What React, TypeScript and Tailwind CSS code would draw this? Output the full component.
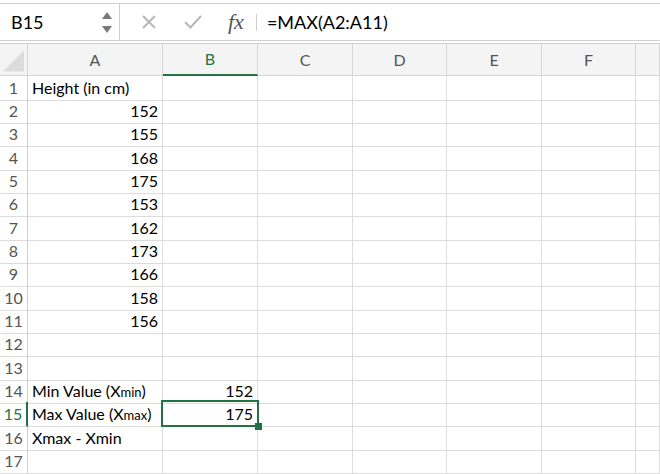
import React from 'react';

const rows: { n: number; a?: React.ReactNode; aRight?: boolean; b?: string }[] = [
  { n: 1, a: 'Height (in cm)' },
  { n: 2, a: '152', aRight: true },
  { n: 3, a: '155', aRight: true },
  { n: 4, a: '168', aRight: true },
  { n: 5, a: '175', aRight: true },
  { n: 6, a: '153', aRight: true },
  { n: 7, a: '162', aRight: true },
  { n: 8, a: '173', aRight: true },
  { n: 9, a: '166', aRight: true },
  { n: 10, a: '158', aRight: true },
  { n: 11, a: '156', aRight: true },
  { n: 12 },
  { n: 13 },
  { n: 14, a: <span>Min Value (X<span className="text-[13px]">min</span>)</span>, b: '152' },
  { n: 15, a: <span>Max Value (X<span className="text-[13px]">max</span>)</span>, b: '175' },
  { n: 16, a: 'Xmax - Xmin' },
  { n: 17 },
];

const heights = ['h-[23px]', 'h-[23px]', 'h-[24px]'];
const cols = ['A', 'B', 'C', 'D', 'E', 'F', ''];
const grid = 'grid grid-cols-[28px_135px_95px_95px_94px_95px_94px_1fr]';

const App: React.FC = () => {
  return (
    <div className="w-[660px] h-[474px] overflow-hidden bg-white text-black font-['Lato','Liberation_Sans',sans-serif]">
      {/* formula bar */}
      <div className="pt-[3px] bg-white">
        <div className="flex h-[38px] border-t border-b border-[#cfcfcf]">
          <div className="w-[120px] flex items-center justify-between border-r border-[#cfcfcf] pl-[11px] pr-[7px]">
            <span className="text-[18px]">B15</span>
            <div className="flex flex-col gap-[7px]">
              <svg width="10" height="7" viewBox="0 0 10 7"><path d="M5 0L10 7H0Z" fill="#7a7a7a" /></svg>
              <svg width="10" height="7" viewBox="0 0 10 7"><path d="M0 0H10L5 7Z" fill="#7a7a7a" /></svg>
            </div>
          </div>
          <div className="flex items-center pl-[21px]">
            <svg width="16" height="16" viewBox="0 0 16 16" className="mr-[27px]">
              <path d="M2 2L14 14M14 2L2 14" stroke="#b8b8b8" strokeWidth="2" />
            </svg>
            <svg width="18" height="16" viewBox="0 0 18 16" className="mr-[26px]">
              <path d="M1 8L6.5 13.5L17 2" stroke="#b8b8b8" strokeWidth="2" fill="none" />
            </svg>
            <span className="font-['Liberation_Serif',serif] italic text-[22px] text-[#555] leading-none mr-[12px]">fx</span>
            <div className="w-px h-[17px] bg-[#cfcfcf] mr-[10px]" />
            <span className="text-[18px]">=MAX(A2:A11)</span>
          </div>
        </div>
      </div>
      {/* column headers */}
      <div className={`${grid} mt-[2px] h-[33px] bg-[#f4f4f4] border-t border-[#cfcfcf]`}>
        <div className="border-r border-b border-[#d6d6d6] flex items-end justify-end p-[3px]">
          <svg width="22" height="22" viewBox="0 0 22 22"><path d="M22 0V22H0Z" fill="#dcdcdc" /></svg>
        </div>
        {cols.map((c) => (
          <div
            key={c || 'g'}
            className={`border-r flex items-center justify-center text-[16px] ${
              c === 'B'
                ? 'border-b-2 border-b-[#217346] border-r-[#d6d6d6] text-[#217346]'
                : 'border-b border-[#d6d6d6] text-[#555]'
            }`}
          >
            {c}
          </div>
        ))}
      </div>
      {/* rows */}
      {rows.map((r, i) => {
        const active = r.n === 15;
        return (
          <div key={r.n} className={`${grid} ${heights[i % 3]} text-[16px] ${active ? 'relative z-10' : ''}`}>
            <div
              className={`flex items-center justify-center border-b border-[#dcdcdc] ${
                active ? 'border-r-2 border-r-[#217346] text-[#217346]' : 'border-r border-r-[#d0d0d0] text-[#555]'
              }`}
            >
              {r.n}
            </div>
            <div
              className={`flex items-center border-r border-b border-[#dcdcdc] px-[4px] whitespace-nowrap ${
                r.aRight ? 'justify-end' : 'justify-start'
              }`}
            >
              {r.a}
            </div>
            <div className="relative flex items-center justify-end border-r border-b border-[#dcdcdc] px-[4px]">
              {r.b}
              {active && (
                <div className="absolute -left-[2px] -top-[2px] -right-[2px] -bottom-[1px] border-2 border-[#217346]">
                  <div className="absolute -right-[5px] -bottom-[5px] w-[7px] h-[7px] bg-[#217346]" />
                </div>
              )}
            </div>
            {[0, 1, 2, 3, 4].map((k) => (
              <div key={k} className="border-r border-b border-[#dcdcdc]" />
            ))}
          </div>
        );
      })}
    </div>
  );
};

export default App;
